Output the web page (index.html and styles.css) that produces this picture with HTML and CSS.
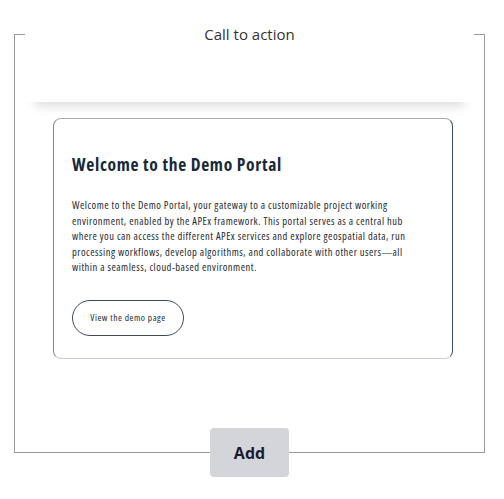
FILE: index.html
```html
<!DOCTYPE html>
<html lang="en">
<head>
<meta charset="utf-8">
<title>Call to action</title>
<link rel="stylesheet" href="styles.css">
</head>
<body>
<section class="block">
  <h1 class="block-title">Call to action</h1>
  <div class="block-header"></div>
  <div class="cta-card">
    <h2 class="cta-title">Welcome to the Demo Portal</h2>
    <p class="cta-text">Welcome to the Demo Portal, your gateway to a customizable project working environment, enabled by the APEx framework. This portal serves as a central hub where you can access the different APEx services and explore geospatial data, run processing workflows, develop algorithms, and collaborate with other users—all within a seamless, cloud-based environment.</p>
    <a class="cta-button" href="#">View the demo page</a>
  </div>
  <div class="block-footer">
    <button class="add-button" type="button">Add</button>
  </div>
</section>
</body>
</html>
```

FILE: styles.css
```css
html, body {
  margin: 0;
  padding: 0;
  background: #ffffff;
}

body {
  padding: 34px 0 45px 14px;
  font-family: "Open Sans", "Noto Sans", sans-serif;
}

.block {
  box-sizing: border-box;
  width: 471px;
  border: 1px solid #9a9a9a;
}

.block-title {
  margin: -12px 10px 0;
  padding: 0;
  background: #ffffff;
  text-align: center;
  font-family: "Open Sans", "Noto Sans", sans-serif;
  font-size: 15px;
  font-weight: 400;
  line-height: 22px;
  color: #333333;
}

.block-header {
  height: 57px;
  margin: 0 12px;
  background: #ffffff;
  box-shadow: 0 12px 10px -8px rgba(0, 0, 0, 0.14);
}

.cta-card {
  box-sizing: border-box;
  width: 400px;
  height: 241px;
  margin: 16px 0 0 38px;
  padding: 32px 23px 0 18px;
  border: 1px solid #7d8893;
  border-top-color: #a3acb5;
  border-right-color: #3d4c5a;
  border-bottom-color: #c9cfd4;
  border-radius: 8px;
  font-family: "Open Sans", "Noto Sans", sans-serif;
  font-stretch: 75%;
  color: #1c2733;
}

.cta-title {
  margin: 0;
  font-size: 17.5px;
  line-height: 26px;
  font-weight: 700;
  letter-spacing: 0.7px;
  color: #17283a;
}

.cta-text {
  margin: 21px 0 0;
  font-size: 10.5px;
  line-height: 15.5px;
  letter-spacing: 0.5px;
  color: #1e2833;
}

.cta-button {
  display: inline-flex;
  align-items: center;
  justify-content: center;
  box-sizing: border-box;
  width: 112px;
  height: 36px;
  margin-top: 24px;
  border: 1px solid #3d4c5a;
  border-radius: 18px;
  font-size: 9.5px;
  letter-spacing: 0.5px;
  color: #1e2b38;
  text-decoration: none;
}

.block-footer {
  display: flex;
  justify-content: center;
  margin-top: 69px;
  margin-bottom: -25px;
}

.add-button {
  width: 79px;
  height: 49px;
  border: 0;
  border-radius: 4px;
  background: #d4d5da;
  font-family: "Open Sans", "Noto Sans", sans-serif;
  font-size: 16px;
  font-weight: 700;
  color: #1b1b2b;
  cursor: pointer;
}
```
